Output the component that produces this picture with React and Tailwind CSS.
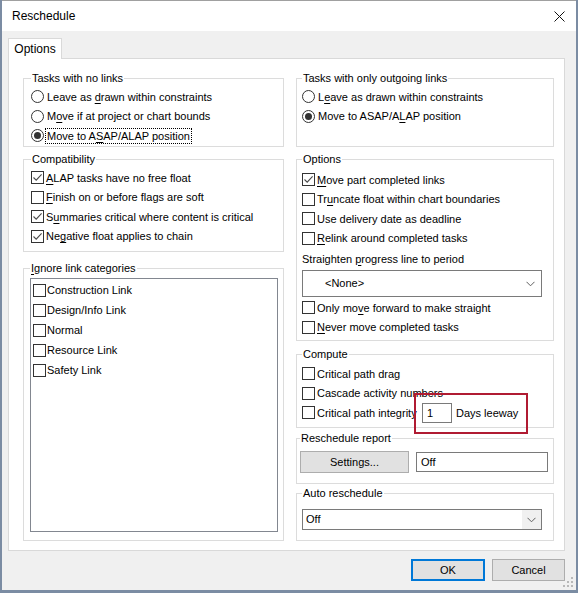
import React from 'react';

// "&x" marks the accelerator letter, drawn underlined like a Win32 dialog
const Acc = ({ text }) => {
  const i = text.indexOf('&');
  if (i < 0) return <span>{text}</span>;
  return (
    <span>
      {text.slice(0, i)}
      <span className="underline underline-offset-[2px]">{text[i + 1]}</span>
      {text.slice(i + 2)}
    </span>
  );
};

const Radio = ({ checked }) => (
  <span className="flex h-[13px] w-[13px] shrink-0 items-center justify-center rounded-full border border-[#333333] bg-white">
    {checked && <span className="h-[7px] w-[7px] rounded-full bg-[#333333]" />}
  </span>
);

const Check = ({ checked }) => (
  <span className="flex h-[13px] w-[13px] shrink-0 items-center justify-center border border-[#333333] bg-white">
    {checked && (
      <svg width="11" height="11" viewBox="0 0 11 11">
        <path d="M1.5 5.5 L4.2 8.2 L9.6 2.4" fill="none" stroke="#4a4a4a" strokeWidth="1.1" />
      </svg>
    )}
  </span>
);

const RadioRow = ({ label, checked, focused }) => (
  <div className="flex h-[19.5px] items-center gap-[1px] whitespace-nowrap">
    <Radio checked={checked} />
    <span className={focused ? 'border border-dotted border-black px-[1px] leading-[14px]' : 'px-[2px]'}>
      <Acc text={label} />
    </span>
  </div>
);

const CheckRow = ({ label, checked }) => (
  <div className="flex h-[19.5px] items-center gap-[2px] whitespace-nowrap">
    <Check checked={checked} />
    <Acc text={label} />
  </div>
);

const Group = ({ title, className = '', children }) => (
  <fieldset className={`relative border border-[#dcdcdc] ${className}`}>
    <legend className="px-[1px] leading-[16px]">
      <Acc text={title} />
    </legend>
    {children}
  </fieldset>
);

const Chevron = () => (
  <svg width="9" height="6" viewBox="0 0 9 6">
    <path d="M0.5 0.8 L4.5 4.8 L8.5 0.8" fill="none" stroke="#606060" strokeWidth="1" />
  </svg>
);

const linkCategories = ['Construction Link', 'Design/Info Link', 'Normal', 'Resource Link', 'Safety Link'];

export default function App() {
  return (
    <div className="flex h-[593px] w-[578px] flex-col bg-[#7b8ca3] font-['Liberation_Sans',Arial,sans-serif] text-[11px] text-black">
      <div className="relative mx-[2px] mb-[3px] flex flex-1 flex-col border-t border-[#a0a0a0] bg-[#f0f0f0]">
        {/* title bar */}
        <div className="flex h-[30px] items-center justify-between bg-white pl-[10px] pr-[11px]">
          <span className="text-[12px]">Reschedule</span>
          <svg width="11" height="11" viewBox="0 0 11 11">
            <path d="M0.5 0.5 L10.5 10.5 M10.5 0.5 L0.5 10.5" stroke="#111" strokeWidth="1" />
          </svg>
        </div>

        <div className="flex flex-1 flex-col pl-[6px] pr-[11px] pt-[7px]">
          {/* tab strip */}
          <div className="flex">
            <div className="relative z-10 -mb-[1px] flex h-[21px] w-[54px] items-center justify-center border border-b-0 border-[#d9d9d9] bg-white pb-[1px] text-[12px]">
              Options
            </div>
          </div>

          {/* tab page */}
          <div className="flex h-[493px] gap-[12px] border border-[#d9d9d9] bg-white pl-[14px] pr-[10px] pt-[11px]">
            {/* left column */}
            <div className="flex w-[261px] flex-col">
              <Group title="Tasks with no links" className="h-[77px] pl-[7px]">
                <div className="pt-[1px]">
                  <RadioRow label="Leave as &drawn within constraints" />
                  <RadioRow label="M&ove if at project or chart bounds" />
                  <RadioRow label="Move to A&SAP/ALAP position" checked focused />
                </div>
              </Group>

              <Group title="Compatibility" className="mt-[4px] h-[101px] pl-[7px]">
                <div className="pt-[1px]">
                  <CheckRow label="&ALAP tasks have no free float" checked />
                  <CheckRow label="&Finish on or before flags are soft" />
                  <CheckRow label="S&ummaries critical where content is critical" checked />
                  <CheckRow label="Ne&gative float applies to chain" checked />
                </div>
              </Group>

              <Group title="&Ignore link categories" className="mt-[8px] h-[281px] pl-[6px]">
                <div className="mt-[2px] h-[254px] w-[248px] border border-[#828790] bg-white pl-[2px] pt-[1px]">
                  {linkCategories.map((name) => (
                    <div key={name} className="flex h-[20px] items-center gap-[1px]">
                      <Check />
                      <span>{name}</span>
                    </div>
                  ))}
                </div>
              </Group>
            </div>

            {/* right column */}
            <div className="flex w-[258px] flex-col">
              <Group title="Tasks with only outgoing links" className="h-[77px] pl-[5px]">
                <div className="pt-[1px]">
                  <RadioRow label="L&eave as drawn within constraints" />
                  <RadioRow label="Move to ASAP/A&LAP position" checked />
                </div>
              </Group>

              <Group title="Options" className="mt-[4px] h-[190px] pl-[5px]">
                <div className="pt-[3px]">
                  <CheckRow label="&Move part completed links" checked />
                  <CheckRow label="Tr&uncate float within chart boundaries" />
                  <CheckRow label="Use delivery date as deadline" />
                  <CheckRow label="&Relink around completed tasks" />
                  <div className="mt-[1px] flex h-[20px] items-center">
                    <Acc text="Straighten &progress line to period" />
                  </div>
                  <div className="mt-[1px] flex h-[27px] w-[240px] items-center justify-between border border-[#7a7a7a] bg-white pl-[22px] pr-[6px]">
                    <span>&lt;None&gt;</span>
                    <Chevron />
                  </div>
                  <div className="mt-[1px]">
                    <CheckRow label="Only mo&ve forward to make straight" />
                    <CheckRow label="&Never move completed tasks" />
                  </div>
                </div>
              </Group>

              <Group title="Compute" className="mt-[5px] h-[82px] pl-[5px]">
                <div className="pt-[2px]">
                  <CheckRow label="Critical path drag" />
                  <CheckRow label="Cascade activity numbers" />
                  <div className="flex h-[19.5px] items-center whitespace-nowrap">
                    <Check />
                    <span className="ml-[2px] w-[105px] shrink-0">Critical path integrity</span>
                    <div className="flex h-[20px] w-[30px] shrink-0 items-center border border-[#7a7a7a] bg-white pl-[4px]">1</div>
                    <span className="ml-[4px]">Days leeway</span>
                  </div>
                </div>
                <div className="absolute left-[117px] top-[31px] z-20 h-[41px] w-[114px] border-2 border-[#b01b32]" />
              </Group>

              <Group title="Reschedule report" className="mt-[2px] h-[54px] pl-[3px]">
                <div className="mt-[5px] flex items-center gap-[7px]">
                  <div className="flex h-[22px] w-[109px] items-center justify-center border border-[#adadad] bg-[#e1e1e1]">
                    Settings...
                  </div>
                  <div className="flex h-[20px] w-[132px] items-center border border-[#7a7a7a] bg-white pl-[4px]">Off</div>
                </div>
              </Group>

              <Group title="Auto reschedule" className="mt-[1px] h-[56px] pl-[5px]">
                <div className="mt-[8px] flex h-[21px] w-[240px] items-stretch border border-[#7a7a7a] bg-white">
                  <span className="flex flex-1 items-center pl-[3px]">Off</span>
                  <span className="flex w-[19px] items-center justify-center bg-[#f0f0f0]">
                    <Chevron />
                  </span>
                </div>
              </Group>
            </div>
          </div>

          {/* buttons */}
          <div className="mt-[8px] flex justify-end gap-[7px]">
            <div className="flex h-[22px] w-[74px] items-center justify-center border-2 border-[#0078d7] bg-[#e1e1e1]">OK</div>
            <div className="flex h-[22px] w-[73px] items-center justify-center border border-[#adadad] bg-[#e1e1e1]">Cancel</div>
          </div>
        </div>

        {/* size grip */}
        <svg className="absolute bottom-[2px] right-[2px]" width="11" height="11" viewBox="0 0 11 11">
          <g fill="#b8b8b8">
            <rect x="8" y="0" width="2" height="2" />
            <rect x="4" y="4" width="2" height="2" />
            <rect x="8" y="4" width="2" height="2" />
            <rect x="0" y="8" width="2" height="2" />
            <rect x="4" y="8" width="2" height="2" />
            <rect x="8" y="8" width="2" height="2" />
          </g>
        </svg>
      </div>
    </div>
  );
}
